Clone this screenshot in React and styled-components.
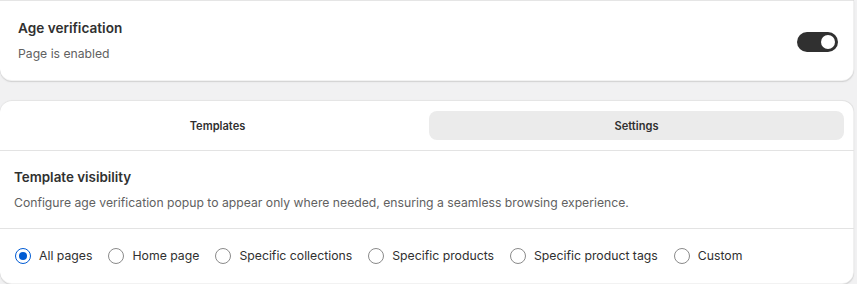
import React, { useState } from "react";
import styled, { createGlobalStyle } from "styled-components";

const Global = createGlobalStyle`
  html, body { margin: 0; padding: 0; background: #f1f1f2; }
  body { font-family: Inter, "Noto Sans", sans-serif; color: #303030; -webkit-font-smoothing: antialiased; }
  * { box-sizing: border-box; }
`;

const Page = styled.div`
  width: 857px;
  height: 284px;
  padding: 0 3px 0 0;
  display: flex;
  flex-direction: column;
  gap: 19px;
  overflow: hidden;
`;

const Card = styled.div`
  background: #fff;
  border-radius: ${(p) => p.$radius || "0 0 12px 12px"};
  box-shadow: 0 1px 0 0 rgba(26, 26, 26, 0.07), 0 1px 0 0 rgba(204, 204, 204, 0.5) inset, 0 -1px 0 0 rgba(0, 0, 0, 0.05) inset, -1px 0 0 0 rgba(0,0,0,0.06) inset, 0 1px 2px rgba(0,0,0,0.08);
  overflow: hidden;
`;

const StatusRow = styled.div`
  display: flex;
  align-items: center;
  justify-content: space-between;
  padding: 18px 16px 18px 18px;
`;

const StatusText = styled.div`
  display: flex;
  flex-direction: column;
  gap: 7px;
`;

const Title = styled.div`
  font-size: ${(p) => p.$size || "13.4px"};
  font-weight: 600;
  line-height: 20px;
  color: #303030;
`;

const Sub = styled.div`
  font-size: 12.2px;
  line-height: 18px;
  color: #616161;
`;

const Toggle = styled.button`
  width: 41px;
  height: 20px;
  border-radius: 10px;
  border: none;
  background: #303030;
  position: relative;
  padding: 0;
  margin-top: 2px;
  cursor: pointer;
  &::after {
    content: "";
    position: absolute;
    top: 3px;
    left: ${(p) => (p.$on ? "24px" : "3px")};
    width: 14px;
    height: 14px;
    border-radius: 50%;
    background: #fff;
  }
`;

const Tabs = styled.div`
  display: grid;
  grid-template-columns: 1fr 1fr;
  gap: 4px;
  padding: 11px 10px 10px 10px;
  border-bottom: 1px solid #e3e3e3;
`;

const Tab = styled.button`
  height: 29px;
  border: none;
  border-radius: 8px;
  background: ${(p) => (p.$active ? "#ebebeb" : "transparent")};
  font-family: inherit;
  font-size: 11.1px;
  font-weight: 600;
  color: #303030;
  cursor: pointer;
`;

const Section = styled.div`
  padding: ${(p) => p.$pad};
  border-bottom: ${(p) => (p.$divider ? "1px solid #e3e3e3" : "none")};
  display: flex;
  flex-direction: column;
  gap: 6px;
`;

const Desc = styled.div`
  font-size: 12.2px;
  line-height: 20px;
  color: #616161;
`;

const RadioRow = styled.div`
  display: flex;
  align-items: center;
  gap: 16px;
`;

const RadioLabel = styled.label`
  display: flex;
  align-items: center;
  gap: 8px;
  font-size: 12.25px;
  line-height: 20px;
  color: #303030;
  cursor: pointer;
`;

const RadioDot = styled.span`
  width: 16px;
  height: 16px;
  border-radius: 50%;
  border: ${(p) => (p.$checked ? "1.5px solid #005bd3" : "1px solid #8a8a8a")};
  display: flex;
  align-items: center;
  justify-content: center;
  &::after {
    content: "";
    width: 8px;
    height: 8px;
    border-radius: 50%;
    background: #005bd3;
    display: ${(p) => (p.$checked ? "block" : "none")};
  }
`;

const options = [
  "All pages",
  "Home page",
  "Specific collections",
  "Specific products",
  "Specific product tags",
  "Custom",
];

export default function App() {
  const [on, setOn] = useState(true);
  const [tab, setTab] = useState("Settings");
  const [choice, setChoice] = useState("All pages");
  return (
    <>
      <Global />
      <Page>
        <Card>
          <StatusRow>
            <StatusText>
              <Title $size="13.6px">Age verification</Title>
              <Sub>Page is enabled</Sub>
            </StatusText>
            <Toggle $on={on} onClick={() => setOn(!on)} aria-label="toggle" />
          </StatusRow>
        </Card>
        <Card $radius="12px">
          <Tabs>
            {["Templates", "Settings"].map((t) => (
              <Tab key={t} $active={tab === t} onClick={() => setTab(t)}>
                {t}
              </Tab>
            ))}
          </Tabs>
          <Section $pad="16px 14px 15px 14px" $divider>
            <Title>Template visibility</Title>
            <Desc>
              Configure age verification popup to appear only where needed, ensuring a seamless browsing experience.
            </Desc>
          </Section>
          <Section $pad="17px 14px 18px 15px">
            <RadioRow>
              {options.map((o) => (
                <RadioLabel key={o} onClick={() => setChoice(o)}>
                  <RadioDot $checked={choice === o} />
                  {o}
                </RadioLabel>
              ))}
            </RadioRow>
          </Section>
        </Card>
      </Page>
    </>
  );
}
